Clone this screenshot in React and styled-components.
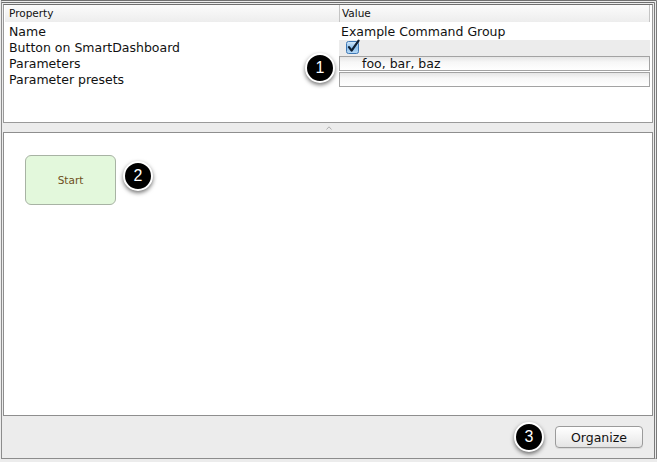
import styled, { createGlobalStyle } from "styled-components";

const GlobalStyle = createGlobalStyle`
  html, body {
    margin: 0;
    padding: 0;
    background: #ececec;
  }
  body {
    font-family: "DejaVu Sans", "Liberation Sans", sans-serif;
    color: #111;
  }
`;

const properties = [
  { name: "Name", kind: "text", value: "Example Command Group" },
  { name: "Button on SmartDashboard", kind: "check", value: true },
  { name: "Parameters", kind: "field", value: "foo, bar, baz" },
  { name: "Parameter presets", kind: "field", value: "" },
];

export default function App() {
  return (
    <>
      <GlobalStyle />
      <Frame>
        <PropertiesPanel>
          <Table>
            <HeaderCell>Property</HeaderCell>
            <HeaderCell $value>Value</HeaderCell>
            {properties.map((p) => (
              <Row key={p.name}>
                <NameCell>{p.name}</NameCell>
                {p.kind === "text" && <ValueCell>{p.value}</ValueCell>}
                {p.kind === "check" && (
                  <CheckCell>
                    <CheckBox checked={p.value} />
                  </CheckCell>
                )}
                {p.kind === "field" && <FieldCell>{p.value}</FieldCell>}
              </Row>
            ))}
          </Table>
          <Badge $left={301} $top={48}>
            1
          </Badge>
        </PropertiesPanel>

        <Divider>
          <Grip viewBox="0 0 6 4">
            <path d="M0.5 3.5 L3 0.8 L5.5 3.5" fill="none" stroke="#b0b0b0" strokeWidth="1" />
          </Grip>
        </Divider>

        <Canvas>
          <StartNode>Start</StartNode>
          <Badge $left={119} $top={28}>
            2
          </Badge>
        </Canvas>

        <BottomBar>
          <InlineBadge>3</InlineBadge>
          <OrganizeButton>Organize</OrganizeButton>
        </BottomBar>
      </Frame>
    </>
  );
}

function CheckBox({ checked }) {
  return (
    <StyledCheck viewBox="0 0 14 14">
      <defs>
        <linearGradient id="cb" x1="0" y1="0" x2="0" y2="1">
          <stop offset="0" stopColor="#d8ebfb" />
          <stop offset="0.5" stopColor="#8fc1ec" />
          <stop offset="1" stopColor="#b9dbf7" />
        </linearGradient>
      </defs>
      <rect x="0.5" y="1.5" width="12" height="12" rx="2" fill="url(#cb)" stroke="#3f78b5" />
      {checked && (
        <path
          d="M3 7.2 L5.6 10.6 L12.6 0.6"
          fill="none"
          stroke="#0f1f33"
          strokeWidth="2.2"
          strokeLinecap="round"
          strokeLinejoin="round"
        />
      )}
    </StyledCheck>
  );
}

const Frame = styled.div`
  box-sizing: border-box;
  width: 656px;
  height: 459px;
  margin-left: 1px;
  border-top: 3px double #6f6f6f;
  border-right: 3px double #7a7a7a;
  border-left: 1px solid #8c8c8c;
  border-bottom: 1px solid #8c8c8c;
  padding: 1px 0 0 1px;
  display: flex;
  flex-direction: column;
`;

const PropertiesPanel = styled.section`
  position: relative;
  box-sizing: border-box;
  height: 119px;
  margin-right: 1px;
  background: #fff;
  border: 1px solid #9a9a9a;
  border-top-color: #6f6f6f;
`;

const Table = styled.div`
  display: grid;
  grid-template-columns: 334px 1fr;
  grid-template-rows: 19px repeat(4, 16px);
  padding: 0 1px;
  margin-right: 1px;
`;

const HeaderCell = styled.div`
  height: 17px;
  font-size: 10.5px;
  line-height: 17px;
  padding-left: ${({ $value }) => ($value ? "2px" : "4px")};
  background: linear-gradient(#fbfbfb, #ededed);
  border-left: ${({ $value }) => ($value ? "1px solid #c4c4c4" : "none")};
  border-right: ${({ $value }) => ($value ? "1px solid #c4c4c4" : "none")};
  color: #111;
`;

const Row = styled.div`
  display: contents;
`;

const NameCell = styled.div`
  font-size: 12.5px;
  line-height: 16px;
  padding-left: 4px;
  white-space: nowrap;
`;

const ValueCell = styled.div`
  font-size: 12.5px;
  line-height: 16px;
  padding-left: 2px;
  white-space: nowrap;
`;

const CheckCell = styled.div`
  box-sizing: border-box;
  display: flex;
  align-items: flex-end;
  padding: 0 0 2px 7px;
  background: #ececec;
`;

const StyledCheck = styled.svg`
  width: 14px;
  height: 14px;
  overflow: visible;
`;

const FieldCell = styled.div`
  box-sizing: border-box;
  border: 1px solid #a3a3a3;
  background: linear-gradient(#e6e6e6, #f7f7f7 40%, #ffffff);
  font-size: 12.5px;
  line-height: 14px;
  padding-left: 22px;
  margin-bottom: 1px;
  white-space: nowrap;
`;

const Divider = styled.div`
  height: 9px;
  display: flex;
  justify-content: center;
  align-items: center;
`;

const Grip = styled.svg`
  width: 6px;
  height: 4px;
  margin-left: 1px;
`;

const Canvas = styled.section`
  position: relative;
  box-sizing: border-box;
  height: 284px;
  margin-right: 1px;
  background: #fff;
  border: 1px solid #8e8e8e;
`;

const StartNode = styled.div`
  position: absolute;
  left: 21px;
  top: 22px;
  width: 91px;
  height: 50px;
  box-sizing: border-box;
  border: 1px solid #a8b3a4;
  border-radius: 6px;
  background: #e3f8dc;
  color: #6e4f1c;
  font-size: 10.5px;
  display: flex;
  align-items: center;
  justify-content: center;
`;

const badgeStyle = `
  box-sizing: border-box;
  width: 30px;
  height: 30px;
  border-radius: 50%;
  background: #000;
  border: 2px solid #fff;
  box-shadow: 0 2px 4px rgba(0, 0, 0, 0.55);
  color: #fff;
  font-family: "Liberation Sans", Arial, sans-serif;
  font-size: 16px;
  display: flex;
  align-items: center;
  justify-content: center;
`;

const Badge = styled.div`
  position: absolute;
  left: ${({ $left }) => $left}px;
  top: ${({ $top }) => $top}px;
  ${badgeStyle}
`;

const InlineBadge = styled.div`
  ${badgeStyle}
`;

const BottomBar = styled.div`
  flex: 1;
  display: flex;
  justify-content: flex-end;
  align-items: center;
  gap: 11px;
  padding-right: 11px;
`;

const OrganizeButton = styled.button`
  box-sizing: border-box;
  width: 88px;
  height: 22px;
  padding: 0;
  border: 1px solid #9b9b9b;
  border-radius: 4px;
  background: linear-gradient(#ffffff, #f1f1f1 55%, #e4e4e4);
  box-shadow: 0 1px 0 rgba(0, 0, 0, 0.08);
  font-family: "DejaVu Sans", "Liberation Sans", sans-serif;
  font-size: 12.5px;
  color: #111;
`;
